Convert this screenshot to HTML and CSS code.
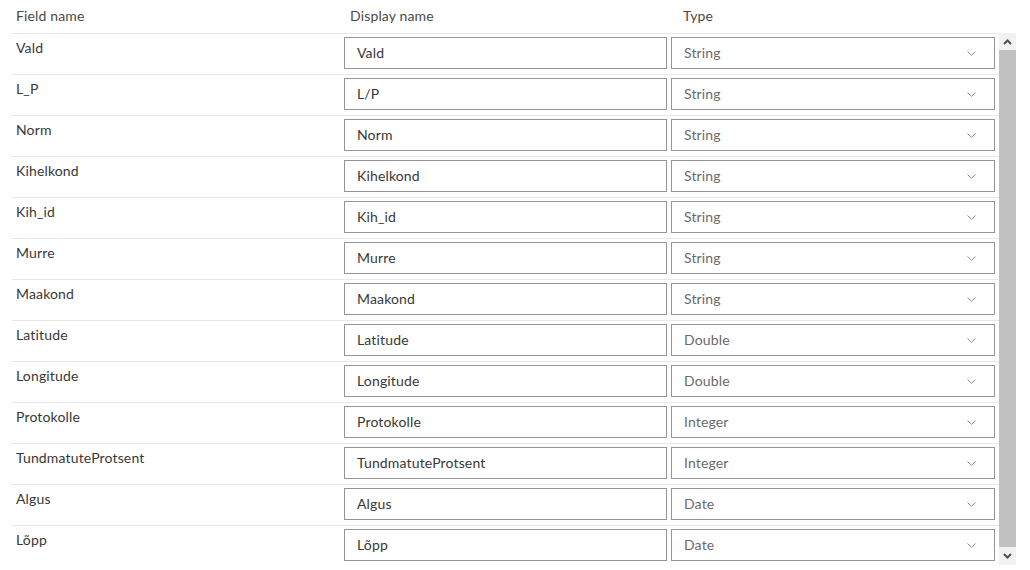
FILE: index.html
```html
<!DOCTYPE html>
<html>
<head>
<meta charset="utf-8">
<link rel="stylesheet" href="styles.css">
</head>
<body>
<div class="panel">
  <div class="head">
    <div class="h-field">Field name</div>
    <div class="h-display">Display name</div>
    <div class="h-type">Type</div>
  </div>
  <div class="body">
    <div class="rows">
      <div class="row"><div class="fname">Vald</div><div class="input">Vald</div><div class="select"><span>String</span><svg class="chev" width="9" height="5" viewBox="0 0 9 5"><polyline points="0.5,0.5 4.5,4.3 8.5,0.5" fill="none" stroke="#8a8a8a" stroke-width="1"/></svg></div></div>
      <div class="row"><div class="fname">L_P</div><div class="input">L/P</div><div class="select"><span>String</span><svg class="chev" width="9" height="5" viewBox="0 0 9 5"><polyline points="0.5,0.5 4.5,4.3 8.5,0.5" fill="none" stroke="#8a8a8a" stroke-width="1"/></svg></div></div>
      <div class="row"><div class="fname">Norm</div><div class="input">Norm</div><div class="select"><span>String</span><svg class="chev" width="9" height="5" viewBox="0 0 9 5"><polyline points="0.5,0.5 4.5,4.3 8.5,0.5" fill="none" stroke="#8a8a8a" stroke-width="1"/></svg></div></div>
      <div class="row"><div class="fname">Kihelkond</div><div class="input">Kihelkond</div><div class="select"><span>String</span><svg class="chev" width="9" height="5" viewBox="0 0 9 5"><polyline points="0.5,0.5 4.5,4.3 8.5,0.5" fill="none" stroke="#8a8a8a" stroke-width="1"/></svg></div></div>
      <div class="row"><div class="fname">Kih_id</div><div class="input">Kih_id</div><div class="select"><span>String</span><svg class="chev" width="9" height="5" viewBox="0 0 9 5"><polyline points="0.5,0.5 4.5,4.3 8.5,0.5" fill="none" stroke="#8a8a8a" stroke-width="1"/></svg></div></div>
      <div class="row"><div class="fname">Murre</div><div class="input">Murre</div><div class="select"><span>String</span><svg class="chev" width="9" height="5" viewBox="0 0 9 5"><polyline points="0.5,0.5 4.5,4.3 8.5,0.5" fill="none" stroke="#8a8a8a" stroke-width="1"/></svg></div></div>
      <div class="row"><div class="fname">Maakond</div><div class="input">Maakond</div><div class="select"><span>String</span><svg class="chev" width="9" height="5" viewBox="0 0 9 5"><polyline points="0.5,0.5 4.5,4.3 8.5,0.5" fill="none" stroke="#8a8a8a" stroke-width="1"/></svg></div></div>
      <div class="row"><div class="fname">Latitude</div><div class="input">Latitude</div><div class="select"><span>Double</span><svg class="chev" width="9" height="5" viewBox="0 0 9 5"><polyline points="0.5,0.5 4.5,4.3 8.5,0.5" fill="none" stroke="#8a8a8a" stroke-width="1"/></svg></div></div>
      <div class="row"><div class="fname">Longitude</div><div class="input">Longitude</div><div class="select"><span>Double</span><svg class="chev" width="9" height="5" viewBox="0 0 9 5"><polyline points="0.5,0.5 4.5,4.3 8.5,0.5" fill="none" stroke="#8a8a8a" stroke-width="1"/></svg></div></div>
      <div class="row"><div class="fname">Protokolle</div><div class="input">Protokolle</div><div class="select"><span>Integer</span><svg class="chev" width="9" height="5" viewBox="0 0 9 5"><polyline points="0.5,0.5 4.5,4.3 8.5,0.5" fill="none" stroke="#8a8a8a" stroke-width="1"/></svg></div></div>
      <div class="row"><div class="fname">TundmatuteProtsent</div><div class="input">TundmatuteProtsent</div><div class="select"><span>Integer</span><svg class="chev" width="9" height="5" viewBox="0 0 9 5"><polyline points="0.5,0.5 4.5,4.3 8.5,0.5" fill="none" stroke="#8a8a8a" stroke-width="1"/></svg></div></div>
      <div class="row"><div class="fname">Algus</div><div class="input">Algus</div><div class="select"><span>Date</span><svg class="chev" width="9" height="5" viewBox="0 0 9 5"><polyline points="0.5,0.5 4.5,4.3 8.5,0.5" fill="none" stroke="#8a8a8a" stroke-width="1"/></svg></div></div>
      <div class="row"><div class="fname">Lõpp</div><div class="input">Lõpp</div><div class="select"><span>Date</span><svg class="chev" width="9" height="5" viewBox="0 0 9 5"><polyline points="0.5,0.5 4.5,4.3 8.5,0.5" fill="none" stroke="#8a8a8a" stroke-width="1"/></svg></div></div>
    </div>
    <div class="scrollbar">
      <div class="sb-btn"><svg width="9" height="6" viewBox="0 0 9 6"><polyline points="1,5 4.5,1.5 8,5" fill="none" stroke="#505050" stroke-width="2"/></svg></div>
      <div class="sb-thumb"></div>
      <div class="sb-btn sb-down"><svg width="9" height="6" viewBox="0 0 9 6"><polyline points="1,1 4.5,4.5 8,1" fill="none" stroke="#505050" stroke-width="2"/></svg></div>
    </div>
  </div>
</div>
</body>
</html>
```

FILE: styles.css
```css
html, body {
  margin: 0;
  padding: 0;
  background: #ffffff;
}

body {
  font-family: "Lato", "Open Sans", sans-serif;
  font-size: 14px;
  letter-spacing: 0.15px;
  color: #383838;
}

.panel {
  width: 1004px;
  padding-left: 12px;
}

.head {
  display: flex;
  height: 33px;
  align-items: center;
  line-height: 20px;
  padding-bottom: 1px;
  box-sizing: border-box;
  color: #4a4a4a;
}

.h-field {
  width: 328px;
  padding-left: 4px;
}

.h-display {
  width: 327px;
  padding-left: 6px;
}

.h-type {
  padding-left: 6px;
}

.body {
  display: flex;
  height: 532px;
}

.rows {
  width: 987px;
  overflow: hidden;
}

.row {
  display: flex;
  height: 40px;
  border-top: 1px solid #e8e8e8;
  align-items: flex-start;
}

.fname {
  width: 328px;
  padding-left: 4px;
  padding-top: 4px;
  line-height: 20px;
}

.input {
  box-sizing: border-box;
  width: 323px;
  height: 32px;
  margin-top: 3px;
  border: 1px solid #959595;
  padding: 0 12px;
  line-height: 30px;
  color: #383838;
}

.select {
  box-sizing: border-box;
  width: 324px;
  height: 32px;
  margin-top: 3px;
  margin-left: 4px;
  border: 1px solid #959595;
  padding: 0 18px 0 12px;
  line-height: 30px;
  color: #6a6a6a;
  display: flex;
  justify-content: space-between;
  align-items: center;
}

.chev {
  display: block;
}

.scrollbar {
  width: 17px;
  display: flex;
  flex-direction: column;
  background: #f1f1f1;
}

.sb-btn {
  height: 17px;
  display: flex;
  align-items: center;
  justify-content: center;
  background: #f1f1f1;
}

.sb-down {
  height: 18px;
}

.sb-thumb {
  flex: 1;
  background: #c1c1c1;
}
```
